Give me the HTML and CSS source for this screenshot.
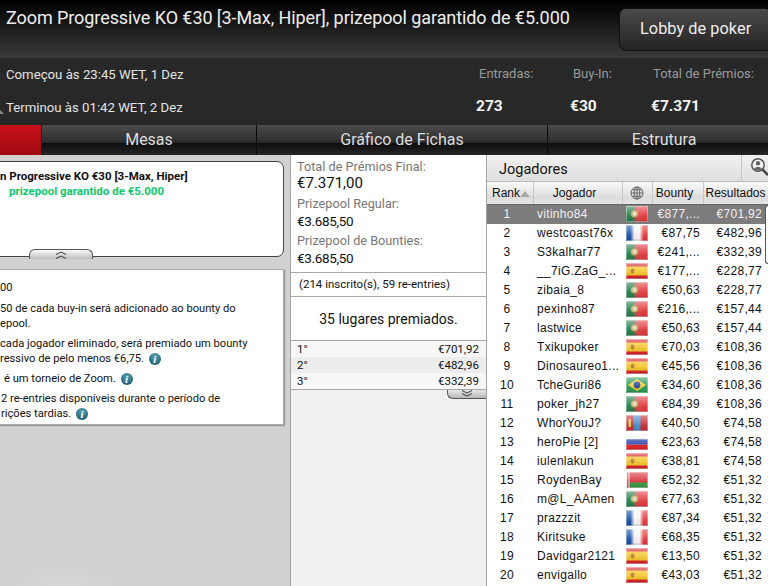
FILE: index.html
```html
<!DOCTYPE html>
<html lang="pt">
<head>
  <meta charset="UTF-8" />
  <title>Zoom Progressive KO</title>
  <link rel="stylesheet" href="styles.css">
</head>
<body>

  <svg class="defs" width="0" height="0">
    <defs>
      <linearGradient id="gloss" x1="0" y1="0" x2="0" y2="1">
        <stop offset="0" stop-color="#fff" stop-opacity="0.45"/>
        <stop offset="0.5" stop-color="#fff" stop-opacity="0.12"/>
        <stop offset="0.85" stop-color="#000" stop-opacity="0.03"/>
        <stop offset="1" stop-color="#000" stop-opacity="0.25"/>
      </linearGradient>
      <linearGradient id="pt-band">
        <stop offset="0.3" stop-color="#2b8050"/>
        <stop offset="0.5" stop-color="#d8484a"/>
        <stop offset="1" stop-color="#ec3438"/>
      </linearGradient>
      <linearGradient id="fr-band">
        <stop offset="0.2" stop-color="#1f55a8"/>
        <stop offset="0.38" stop-color="#f6f6f6"/>
        <stop offset="0.62" stop-color="#f6f6f6"/>
        <stop offset="0.8" stop-color="#e63a3e"/>
      </linearGradient>
      <g id="shine">
        <rect width="22" height="16" fill="url(#gloss)"/>
        <rect x=".5" y=".5" width="21" height="15" fill="none" stroke="#fff" stroke-opacity=".35"/>
      </g>
      <symbol id="flag-pt" viewBox="0 0 22 16">
        <rect width="22" height="16" fill="url(#pt-band)"/>
        <circle cx="8.5" cy="8" r="3.6" fill="#c8b060"/>
        <circle cx="8.5" cy="8" r="1.9" fill="#e4dcd0"/>
        <use href="#shine"/>
      </symbol>
      <symbol id="flag-fr" viewBox="0 0 22 16">
        <rect width="22" height="16" fill="url(#fr-band)"/>
        <use href="#shine"/>
      </symbol>
      <symbol id="flag-es" viewBox="0 0 22 16">
        <rect width="22" height="16" fill="#d8262c"/>
        <rect y="3.5" width="22" height="9" fill="#f4c62c"/>
        <ellipse cx="6.5" cy="8" rx="2" ry="2.4" fill="#b8762c"/>
        <use href="#shine"/>
      </symbol>
      <symbol id="flag-br" viewBox="0 0 22 16">
        <rect width="22" height="16" fill="#2f9a55"/>
        <polygon points="11,2 20,8 11,14 2,8" fill="#f0d23c"/>
        <circle cx="11" cy="8" r="3.4" fill="#2c4a94"/>
        <use href="#shine"/>
      </symbol>
      <symbol id="flag-mn" viewBox="0 0 22 16">
        <rect width="22" height="16" fill="#c8323a"/>
        <rect x="7.5" width="7" height="16" fill="#4a8fc8"/>
        <rect x="2.5" y="4" width="2.5" height="8" fill="#e8c84a"/>
        <use href="#shine"/>
      </symbol>
      <symbol id="flag-ru" viewBox="0 0 22 16">
        <rect width="22" height="16" fill="#f4f4f4"/>
        <rect y="5.3" width="22" height="5.4" fill="#3c50b0"/>
        <rect y="10.7" width="22" height="5.3" fill="#e0282c"/>
        <use href="#shine"/>
      </symbol>
      <symbol id="flag-by" viewBox="0 0 22 16">
        <rect width="22" height="16" fill="#d8353c"/>
        <rect y="10.5" width="22" height="5.5" fill="#3f9a48"/>
        <rect width="3.5" height="16" fill="#f4e4e4"/>
        <rect x="1.2" width="1.2" height="16" fill="#d8353c"/>
        <use href="#shine"/>
      </symbol>
    </defs>
  </svg>

  <!-- Header -->
  <div class="topbar">
    <div class="title">Zoom Progressive KO €30 [3-Max, Hiper], prizepool garantido de €5.000</div>
    <button class="btn-lobby">Lobby de poker</button>
  </div>

  <!-- Info -->
  <div class="infobar">
    <div class="times">
      <p>Começou às 23:45 WET, 1 Dez</p>
      <p>Terminou às 01:42 WET, 2 Dez</p>
    </div>
    <div class="stat stat-entries"><span>Entradas:</span><b>273</b></div>
    <div class="stat stat-buyin"><span>Buy-In:</span><b>€30</b></div>
    <div class="stat stat-total"><span>Total de Prémios:</span><b>€7.371</b></div>
  </div>

  <!-- Tabs -->
  <div class="tabs">
    <a class="tab tab-red"></a>
    <a class="tab tab-mesas">Mesas</a>
    <a class="tab tab-fichas">Gráfico de Fichas</a>
    <a class="tab tab-estrutura">Estrutura</a>
  </div>

  <div class="main">

    <!-- Left column -->
    <div class="col-left">
      <div class="card">
        <p class="card-name">n Progressive KO €30 [3-Max, Hiper]</p>
        <p class="card-green">prizepool garantido de €5.000</p>
        <div class="handle handle-up">
          <svg width="12" height="8" viewBox="0 0 12 8"><path d="M1 3.5 6 1l5 2.5M1 7.5 6 5l5 2.5" fill="none" stroke="#333" stroke-width="1"/></svg>
        </div>
      </div>
      <div class="details">
        <p class="line-first">00</p>
        <p>50 de cada buy-in será adicionado ao bounty do<br>epool.</p>
        <p>cada jogador eliminado, será premiado um bounty<br>ressivo de pelo menos €6,75. <span class="info">i</span></p>
        <p class="line-zoom">é um torneio de Zoom. <span class="info">i</span></p>
        <p class="line-two">2 re-entries disponíveis durante o período de<br>rições tardias. <span class="info">i</span></p>
      </div>
    </div>

    <!-- Middle column -->
    <div class="col-mid">
      <div class="prizes">
        <label>Total de Prémios Final:</label>
        <div class="big">€7.371,00</div>
        <label>Prizepool Regular:</label>
        <div class="amount">€3.685,50</div>
        <label>Prizepool de Bounties:</label>
        <div class="amount">€3.685,50</div>
      </div>
      <div class="entries">(214 inscrito(s), 59 re-entries)</div>
      <div class="paid">35 lugares premiados.</div>
      <div class="places">
        <div class="place"><span>1°</span><span>€701,92</span></div>
        <div class="place"><span>2°</span><span>€482,96</span></div>
        <div class="place"><span>3°</span><span>€332,39</span></div>
      </div>
      <div class="handle handle-down">
        <svg width="12" height="7" viewBox="0 0 12 7"><path d="M1 .5 6 3l5-2.5M1 3.5 6 6l5-2.5" fill="none" stroke="#333" stroke-width="1"/></svg>
      </div>
    </div>

    <!-- Players -->
    <div class="col-players">
      <div class="players-head">
        <span>Jogadores</span>
        <div class="search">
          <svg width="19" height="20" viewBox="0 0 19 20">
            <circle cx="8" cy="8" r="6.2" fill="#f4f4f4" stroke="#555" stroke-width="1.5"/>
            <circle cx="8" cy="6.2" r="2.2" fill="#666"/>
            <path d="M4.3 12c.5-2.6 6.9-2.6 7.4 0a5.5 5.5 0 0 1-7.4 0z" fill="#666"/>
            <path d="M12.6 12.6 18 18" stroke="#444" stroke-width="2.6"/>
          </svg>
        </div>
      </div>
      <div class="scroll-thumb"></div>
      <table>
        <colgroup>
          <col class="c-rank"><col class="c-name"><col class="c-flag"><col class="c-bounty"><col class="c-result">
        </colgroup>
        <thead>
          <tr>
            <th class="th-rank">Rank<i class="sort"></i></th>
            <th class="th-name">Jogador</th>
            <th>
              <svg class="globe" width="14" height="14" viewBox="0 0 14 14" fill="none" stroke="#666" stroke-width="1">
                <circle cx="7" cy="7" r="6"/><ellipse cx="7" cy="7" rx="2.8" ry="6"/><path d="M1 7h12M2 3.8h10M2 10.2h10M7 1v12"/>
              </svg>
            </th>
            <th class="th-bounty">Bounty</th>
            <th>Resultados</th>
          </tr>
        </thead>
        <tbody>
          <tr class="selected"><td>1</td><td>vitinho84</td><td><svg class="flag"><use href="#flag-pt"/></svg></td><td>€877,...</td><td>€701,92</td></tr>
          <tr><td>2</td><td>westcoast76x</td><td><svg class="flag"><use href="#flag-fr"/></svg></td><td>€87,75</td><td>€482,96</td></tr>
          <tr><td>3</td><td>S3kalhar77</td><td><svg class="flag"><use href="#flag-pt"/></svg></td><td>€241,...</td><td>€332,39</td></tr>
          <tr><td>4</td><td>__7iG.ZaG_...</td><td><svg class="flag"><use href="#flag-es"/></svg></td><td>€177,...</td><td>€228,77</td></tr>
          <tr><td>5</td><td>zibaia_8</td><td><svg class="flag"><use href="#flag-pt"/></svg></td><td>€50,63</td><td>€228,77</td></tr>
          <tr><td>6</td><td>pexinho87</td><td><svg class="flag"><use href="#flag-pt"/></svg></td><td>€216,...</td><td>€157,44</td></tr>
          <tr><td>7</td><td>lastwice</td><td><svg class="flag"><use href="#flag-pt"/></svg></td><td>€50,63</td><td>€157,44</td></tr>
          <tr><td>8</td><td>Txikupoker</td><td><svg class="flag"><use href="#flag-es"/></svg></td><td>€70,03</td><td>€108,36</td></tr>
          <tr><td>9</td><td>Dinosaureo1...</td><td><svg class="flag"><use href="#flag-es"/></svg></td><td>€45,56</td><td>€108,36</td></tr>
          <tr><td>10</td><td>TcheGuri86</td><td><svg class="flag"><use href="#flag-br"/></svg></td><td>€34,60</td><td>€108,36</td></tr>
          <tr><td>11</td><td>poker_jh27</td><td><svg class="flag"><use href="#flag-pt"/></svg></td><td>€84,39</td><td>€108,36</td></tr>
          <tr><td>12</td><td>WhorYouJ?</td><td><svg class="flag"><use href="#flag-mn"/></svg></td><td>€40,50</td><td>€74,58</td></tr>
          <tr><td>13</td><td>heroPie [2]</td><td><svg class="flag"><use href="#flag-ru"/></svg></td><td>€23,63</td><td>€74,58</td></tr>
          <tr><td>14</td><td>iulenlakun</td><td><svg class="flag"><use href="#flag-es"/></svg></td><td>€38,81</td><td>€74,58</td></tr>
          <tr><td>15</td><td>RoydenBay</td><td><svg class="flag"><use href="#flag-by"/></svg></td><td>€52,32</td><td>€51,32</td></tr>
          <tr><td>16</td><td>m@L_AAmen</td><td><svg class="flag"><use href="#flag-pt"/></svg></td><td>€77,63</td><td>€51,32</td></tr>
          <tr><td>17</td><td>prazzzit</td><td><svg class="flag"><use href="#flag-fr"/></svg></td><td>€87,34</td><td>€51,32</td></tr>
          <tr><td>18</td><td>Kiritsuke</td><td><svg class="flag"><use href="#flag-fr"/></svg></td><td>€68,35</td><td>€51,32</td></tr>
          <tr><td>19</td><td>Davidgar2121</td><td><svg class="flag"><use href="#flag-es"/></svg></td><td>€13,50</td><td>€51,32</td></tr>
          <tr><td>20</td><td>envigallo</td><td><svg class="flag"><use href="#flag-es"/></svg></td><td>€43,03</td><td>€51,32</td></tr>
          <tr><td></td><td></td><td><svg class="flag"><use href="#flag-ru"/></svg></td><td></td><td></td></tr>
        </tbody>
      </table>
    </div>

  </div>

</body>
</html>
```

FILE: styles.css
```css
html, body {
  margin: 0;
  height: 586px;
  overflow: hidden;
}

body {
  display: flex;
  flex-direction: column;
  font-family: 'Liberation Sans', sans-serif;
  background-color: #d2d0d0;
  color: #111;
}

p {
  margin: 0;
}

.defs {
  position: absolute;
}

/* Header */
.topbar {
  height: 58px;
  flex: none;
  display: flex;
  justify-content: space-between;
  box-sizing: border-box;
  padding: 7px 0 0 6px;
  background: linear-gradient(#000, #3a3a3a);
}

.title {
  color: #eee;
  font-family: Roboto, sans-serif;
  font-size: 18px;
  line-height: 22px;
  letter-spacing: -0.08px;
  white-space: nowrap;
}

.btn-lobby {
  width: 153px;
  height: 43px;
  margin: 1px -4px 0 0;
  padding: 0 0 2px 0;
  text-align: left;
  text-indent: 20px;
  color: #eee;
  font-family: Roboto, sans-serif;
  font-size: 16.3px;
  letter-spacing: 0.05px;
  border: 1px solid #111;
  border-radius: 7px;
  background: linear-gradient(#4a4a4a, #232323);
}

/* Info */
.infobar {
  position: relative;
  height: 67px;
  flex: none;
  display: flex;
  background-color: #282828;
  font-family: Roboto, sans-serif;
}

/* bit of the collapse arrow, cut off by the window edge */
.infobar::before {
  content: "";
  position: absolute;
  left: 0;
  top: 52px;
  border-bottom: 4px solid #888;
  border-right: 4px solid transparent;
}

.times {
  width: 470px;
  padding-left: 6px;
  box-sizing: border-box;
  color: #e4e4e4;
  font-size: 13.2px;
  line-height: 33px;
}

.stat {
  display: flex;
  flex-direction: column;
  padding-top: 7px;
  color: #999;
  font-size: 13px;
}

.stat span {
  line-height: 18px;
  white-space: nowrap;
}

.stat b {
  margin-top: 12px;
  color: #f2f2f2;
  font-size: 15.5px;
  line-height: 22px;
}

.stat-entries {
  width: 100px;
  padding-left: 9px;
  box-sizing: border-box;
}

.stat-entries b {
  margin-left: -3px;
}

.stat-buyin {
  width: 83px;
  padding-left: 3px;
  box-sizing: border-box;
}

.stat-buyin b {
  margin-left: -3px;
}

.stat-total b {
  margin-left: -2px;
}

/* Tabs */
.tabs {
  height: 30px;
  flex: none;
  display: flex;
}

.tab {
  flex: none;
  box-sizing: border-box;
  border-right: 1px solid #0a0a0a;
  text-align: center;
  color: #ddd;
  font-family: Roboto, sans-serif;
  font-size: 16px;
  line-height: 30px;
  background: linear-gradient(#4c4c4c 0, #2c2c2c 58%, #0c0c0c 60%, #262626 100%);
}

.tab-red {
  width: 42px;
  background: linear-gradient(#c8101a, #a00a10);
}

.tab-mesas {
  width: 215px;
}

.tab-fichas {
  width: 291px;
}

.tab-estrutura {
  width: 232px;
  border-right: none;
}

/* Main area */
.main {
  flex: 1;
  display: flex;
  min-height: 0;
}

.col-left {
  width: 290px;
  flex: none;
  padding: 6px 6px 0 0;
  box-sizing: border-box;
  background: radial-gradient(ellipse 55px 22px at 62px 431px, #d8d8d6, transparent);
}

.card {
  position: relative;
  height: 96px;
  box-sizing: border-box;
  margin-left: -8px;
  padding: 7px 0 0 0;
  background-color: #fff;
  border: 1px solid #444;
  border-radius: 7px;
  font-family: Roboto, sans-serif;
  font-size: 11.5px;
  line-height: 15px;
  font-weight: bold;
  white-space: nowrap;
}

.card-name {
  padding-left: 7px;
}

.card-green {
  padding-left: 16px;
  color: #0fc768;
}

.handle {
  display: flex;
  justify-content: center;
  background: linear-gradient(#fafafa, #bdbdbd);
  border: 1px solid #555;
}

.handle-up {
  position: absolute;
  left: 36px;
  bottom: -3px;
  width: 62px;
  height: 9px;
  border-bottom: none;
  border-radius: 6px 6px 0 0;
}

.handle-up svg {
  margin-top: 1px;
}

.details {
  height: 156px;
  box-sizing: border-box;
  margin: 12px 0 0 -1px;
  padding: 10px 0 0 1px;
  background-color: #fff;
  border: 1px solid #aaa;
  border-left: none;
  box-shadow: 1px 1px 1px #999;
  font-family: Roboto, sans-serif;
  font-size: 11.15px;
  line-height: 15px;
  white-space: nowrap;
}

.details p {
  margin-bottom: 5px;
}

.details .line-first {
  margin-bottom: 6px;
}

.details .line-zoom {
  padding-left: 4px;
}

.details .line-two {
  padding-left: 1px;
}

.info {
  display: inline-block;
  width: 12px;
  height: 12px;
  border-radius: 50%;
  margin-left: 2px;
  vertical-align: -1px;
  text-align: center;
  color: #fff;
  font-family: 'Liberation Serif', serif;
  font-size: 11px;
  font-style: italic;
  font-weight: bold;
  line-height: 12px;
  background: radial-gradient(circle at 50% 30%, #5aa4b4, #0f4a60);
}

/* Middle column */
.col-mid {
  width: 197px;
  flex: none;
  box-sizing: border-box;
  border-left: 1px solid #a4a4a4;
  border-right: 1px solid #a4a4a4;
  background-color: #f0f0f0;
  font-family: Roboto, sans-serif;
}

.prizes {
  height: 118px;
  box-sizing: border-box;
  padding: 3px 0 0 6px;
  background-color: #fff;
  border-bottom: 1px solid #a8a8a8;
}

.prizes label {
  display: block;
  color: #777;
  font-size: 12.7px;
  line-height: 17px;
}

.big {
  color: #111;
  font-size: 15px;
  line-height: 17px;
  margin-bottom: 3px;
}

.amount {
  color: #111;
  font-size: 13.5px;
  line-height: 18px;
  letter-spacing: -0.35px;
  margin-bottom: 2px;
}

.entries {
  height: 24px;
  box-sizing: border-box;
  padding-left: 8px;
  background-color: #fff;
  border-bottom: 1px solid #a8a8a8;
  font-size: 11.5px;
  line-height: 23px;
}

.paid {
  height: 44px;
  box-sizing: border-box;
  text-align: center;
  background-color: #fff;
  border-bottom: 1px solid #a8a8a8;
  font-size: 14px;
  line-height: 44px;
}

.places {
  border-bottom: 1px solid #a8a8a8;
}

.place {
  display: flex;
  justify-content: space-between;
  height: 16px;
  padding: 0 7px 0 6px;
  font-size: 11.5px;
  line-height: 16px;
  background-color: #f7f7f7;
}

.place:nth-child(2) {
  background-color: #ededed;
}

.handle-down {
  width: 38px;
  height: 8px;
  margin-left: auto;
  border-top: none;
  border-right: none;
  border-radius: 0 0 0 6px;
  background: linear-gradient(#e8e8e8, #b8b8b8);
}

/* Players */
.col-players {
  position: relative;
  flex: 1;
  min-width: 0;
  background-color: #fff;
}

.players-head {
  height: 26px;
  display: flex;
  justify-content: space-between;
  padding-left: 12px;
  border-bottom: 1px solid #bbb;
  background: linear-gradient(#f2f2f2, #dedede);
  font-family: Roboto, sans-serif;
  font-size: 14.5px;
  line-height: 30px;
}

.search {
  width: 27px;
  padding: 2px 0 0 8px;
  box-sizing: border-box;
  border-left: 1px solid #c4c4c4;
  overflow: hidden;
}

.scroll-thumb {
  position: absolute;
  top: 50px;
  right: 0;
  z-index: 1;
  width: 2px;
  height: 57px;
  background-color: #fff;
  border: 1px solid #555;
  border-right: none;
  border-radius: 3px 0 0 3px;
}

table {
  width: 281px;
  table-layout: fixed;
  border-collapse: collapse;
  font-size: 12px;
  letter-spacing: 0.3px;
}

.c-rank { width: 46px; }
.c-name { width: 89px; }
.c-flag { width: 30px; }
.c-bounty { width: 51px; }
.c-result { width: 65px; }

th {
  height: 22px;
  padding: 0;
  box-sizing: border-box;
  font-weight: normal;
  letter-spacing: 0;
  text-align: center;
  white-space: nowrap;
  border-right: 1px solid #c8c8c8;
  border-bottom: 1px solid #666;
  background: linear-gradient(#fafafa, #dcdcdc 70%, #e4e4e4);
}

.th-rank {
  text-align: left;
  padding-left: 5px;
}

.th-name {
  padding-right: 6px;
}

.th-bounty {
  padding-right: 6px;
}

.sort {
  display: inline-block;
  border-left: 5px solid transparent;
  border-right: 5px solid transparent;
  border-bottom: 6px solid #aaa;
}

.globe {
  vertical-align: middle;
}

td {
  height: 19px;
  padding: 0;
  white-space: nowrap;
  overflow: hidden;
}

td:nth-child(1) {
  text-align: center;
  padding-right: 6px;
}

td:nth-child(2) {
  padding-left: 4px;
}

td:nth-child(4) {
  text-align: right;
  padding-right: 3px;
}

td:nth-child(5) {
  text-align: right;
  padding-right: 6px;
}

.flag {
  display: block;
  width: 22px;
  height: 16px;
  margin: 0 auto;
}

.selected td {
  background-color: #7c7c7c;
  color: #f0f0f0;
}
```
